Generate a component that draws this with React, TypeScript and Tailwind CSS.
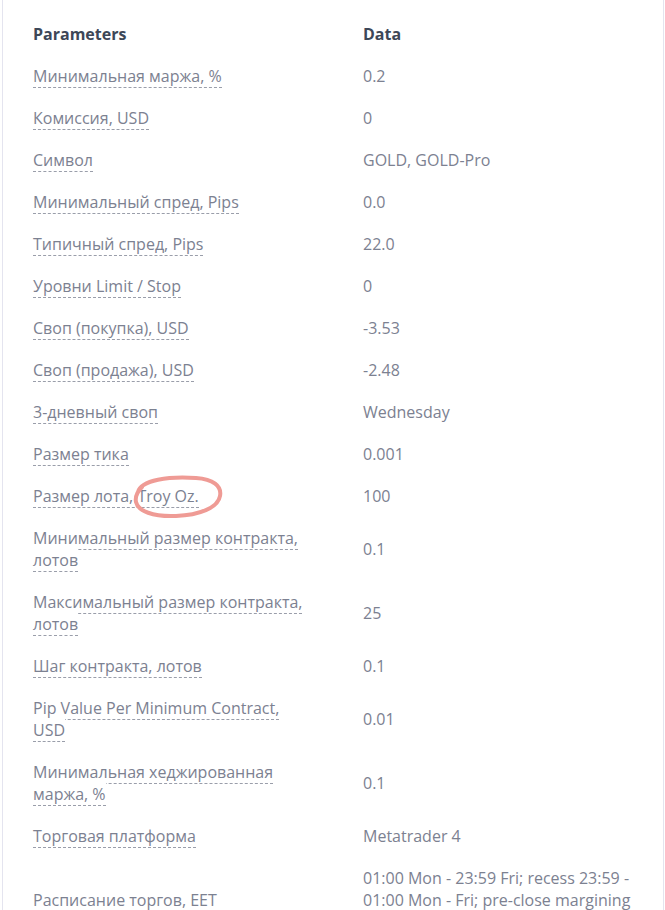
const rows: [string, string][] = [
  ['Минимальная маржа, %', '0.2'],
  ['Комиссия, USD', '0'],
  ['Символ', 'GOLD, GOLD-Pro'],
  ['Минимальный спред, Pips', '0.0'],
  ['Типичный спред, Pips', '22.0'],
  ['Уровни Limit / Stop', '0'],
  ['Своп (покупка), USD', '-3.53'],
  ['Своп (продажа), USD', '-2.48'],
  ['3-дневный своп', 'Wednesday'],
  ['Размер тика', '0.001'],
  ['Размер лота, Troy Oz.', '100'],
  ['Минимальный размер контракта, лотов', '0.1'],
  ['Максимальный размер контракта, лотов', '25'],
  ['Шаг контракта, лотов', '0.1'],
  ['Pip Value Per Minimum Contract, USD', '0.01'],
  ['Минимальная хеджированная маржа, %', '0.1'],
  ['Торговая платформа', 'Metatrader 4'],
  [
    'Расписание торгов, EET',
    '01:00 Mon - 23:59 Fri; recess 23:59 - 01:00 Mon - Fri; pre-close margining 23:00 - 23:59 Fri',
  ],
];

export default function App() {
  return (
    <div className="min-h-[910px] bg-white font-['Open_Sans',sans-serif] text-[16px] leading-[22px]">
      <div className="relative ml-[2px] w-[662px] border-x border-[#e4e4ef] px-[30px] pt-[13px] pb-10">
        <div className="grid grid-cols-[270px_270px] gap-x-[60px] py-[10px] font-bold text-[#3d4757]">
          <div>Parameters</div>
          <div>Data</div>
        </div>
        {rows.map(([label, value]) => (
          <div
            key={label}
            className="grid grid-cols-[270px_270px] items-center gap-x-[60px] py-[10px] text-[#7c8191]"
          >
            <div>
              <span className="border-b border-dashed border-[#9a9eaa] bg-white">{label}</span>
            </div>
            <div>{value}</div>
          </div>
        ))}

        {/* hand-drawn highlight around "Troy Oz." */}
        <svg
          className="pointer-events-none absolute left-[-2px] top-0"
          width="665"
          height="910"
          viewBox="0 0 665 910"
          fill="none"
        >
          <path
            d="M137 492 C140 480 168 476 195 478 C212 479 221 486 219 496 C217 508 198 515 175 516 C152 517 137 511 135 502 C134 497 136 492 141 487"
            stroke="#ef9b95"
            strokeWidth="4"
            strokeLinecap="round"
          />
        </svg>
      </div>
    </div>
  );
}
